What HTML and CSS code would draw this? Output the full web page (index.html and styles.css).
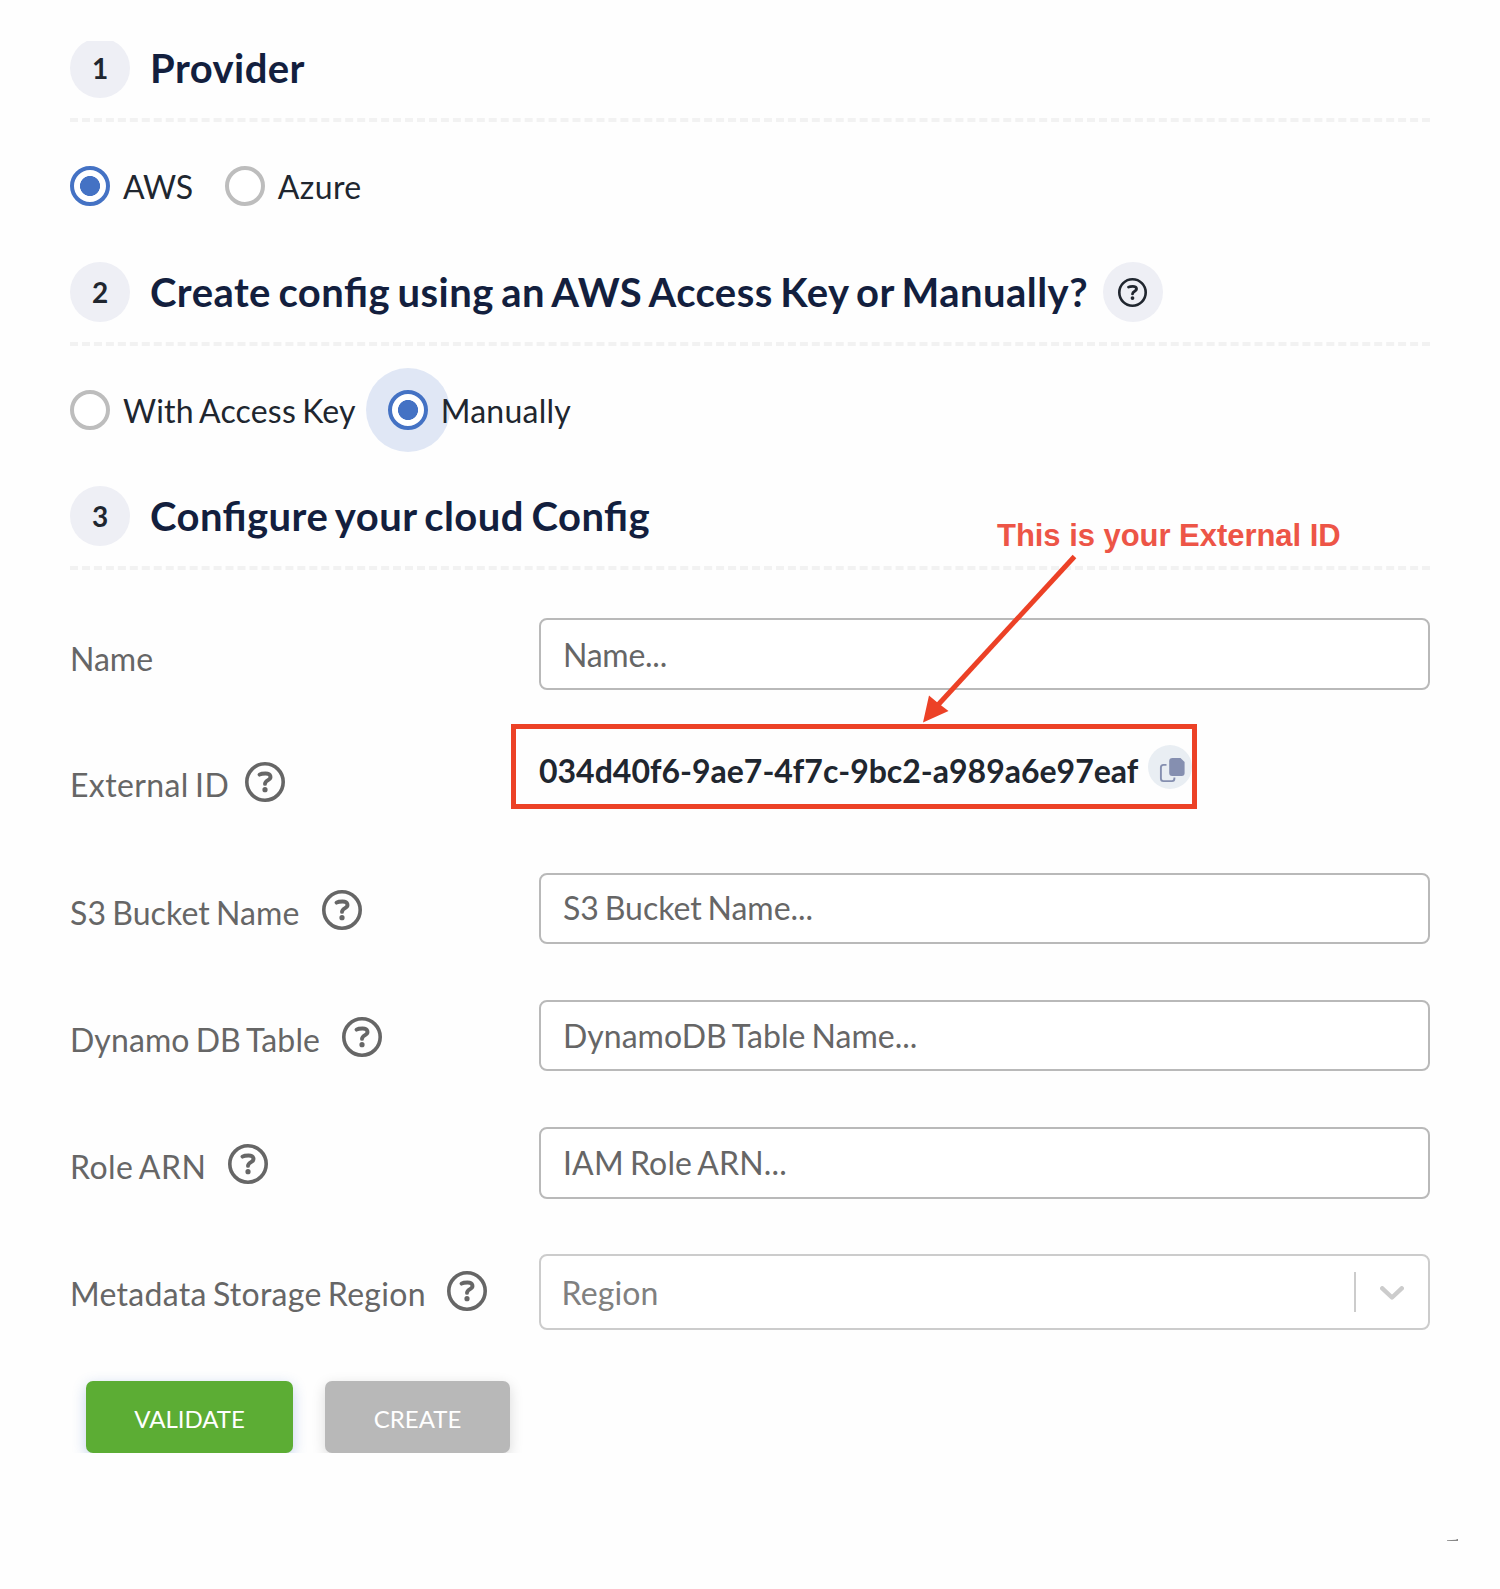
FILE: index.html
```html
<!DOCTYPE html>
<html lang="en">
<head>
<meta charset="utf-8">
<title>Cloud Config</title>
<link rel="stylesheet" href="styles.css">
</head>
<body>
<svg class="defs" width="0" height="0">
  <symbol id="help" viewBox="0 0 40 40">
    <circle cx="20" cy="20" r="18.2" fill="none" stroke="currentColor" stroke-width="3.6"/>
    <path d="M14.500 12.600C16 11.700 18 11.500 20.500 11.500C26.400 11.500 26.600 16 23.400 17.900C21.200 19.200 20 20 20 21.900" fill="none" stroke="currentColor" stroke-width="3.900" stroke-linecap="round"/>
    <circle cx="20" cy="27.700" r="2.600" fill="currentColor"/>
  </symbol>
</svg>
<main class="wizard">
  <section class="step">
    <header class="step-head"><span class="badge">1</span><h2>Provider</h2></header>
    <svg class="rule"><line x1="0" y1="2" x2="1360" y2="2"/></svg>
    <div class="options">
      <label class="option"><span class="radio on"></span><span class="t-aws">AWS</span></label>
      <label class="option"><span class="radio"></span><span class="t-azure">Azure</span></label>
    </div>
  </section>
  <section class="step">
    <header class="step-head"><span class="badge">2</span><h2 class="h-create">Create config using an AWS Access Key or Manually?</h2><span class="badge tip"><svg><use href="#help"/></svg></span></header>
    <svg class="rule"><line x1="0" y1="2" x2="1360" y2="2"/></svg>
    <div class="options">
      <label class="option"><span class="radio"></span><span class="t-key">With Access Key</span></label>
      <label class="option"><span class="radio on focus"></span><span class="t-man">Manually</span></label>
    </div>
  </section>
  <section class="step last">
    <header class="step-head"><span class="badge">3</span><h2>Configure your cloud Config</h2></header>
    <svg class="rule"><line x1="0" y1="2" x2="1360" y2="2"/></svg>
    <div class="fields">
      <div class="row name"><div class="label"><span>Name</span></div><div class="input">Name...</div></div>
      <div class="row ext"><div class="label near"><span>External ID</span><svg><use href="#help"/></svg></div>
        <div class="external"><strong>034d40f6-9ae7-4f7c-9bc2-a989a6e97eaf</strong>
          <span class="copy"><svg viewBox="0 0 44 44"><path d="M18.500 19.900H15.500Q12.900 19.900 12.900 22.500V33.500Q12.900 36.100 15.500 36.100H24Q26.400 36.100 26.400 33.500V32.500" fill="none" stroke="#858fb0" stroke-width="1.900"/><path d="M24.500 13H32.500L36.600 17V28Q36.600 31 33.600 31H24.200Q21.200 31 21.200 28V16Q21.200 13 24.500 13Z" fill="#858fb0"/></svg></span>
        </div></div>
      <div class="row bucket"><div class="label"><span>S3 Bucket Name</span><svg><use href="#help"/></svg></div><div class="input">S3 Bucket Name...</div></div>
      <div class="row dynamo"><div class="label"><span>Dynamo DB Table</span><svg><use href="#help"/></svg></div><div class="input">DynamoDB Table Name...</div></div>
      <div class="row role"><div class="label"><span>Role ARN</span><svg><use href="#help"/></svg></div><div class="input">IAM Role ARN...</div></div>
      <div class="row region"><div class="label"><span>Metadata Storage Region</span><svg><use href="#help"/></svg></div>
        <div class="input select"><span>Region</span><svg class="chevron" viewBox="0 0 24 14"><path d="M2.300 2.300L12 11.500L21.700 2.300" fill="none" stroke="#ccc" stroke-width="4.400" stroke-linecap="round" stroke-linejoin="round"/></svg></div></div>
    </div>
    <div class="actions"><button class="validate">VALIDATE</button><button class="create">CREATE</button></div>
  </section>
</main>
<div class="callout-box"></div>
<div class="callout-text">This is your External ID</div>
<svg class="callout-arrow" viewBox="0 0 170 180"><path d="M159.500 6.500L22 156" stroke="#ec4126" stroke-width="5" fill="none"/><path d="M8 172.500L14 145.500L23 153L33.500 161Z" fill="#ec4126"/></svg>
<svg class="corner" viewBox="0 0 11 2"><path d="M0 2V1.300L9 .8L10 0H11V2Z" fill="#888"/></svg>
</body>
</html>
```
FILE: styles.css
```css
* { box-sizing: border-box; }
body {
  margin: 0;
  position: relative;
  width: 1500px;
  height: 1589px;
  overflow: hidden;
  background: #fefefe;
  color: #20262f;
  font-family: Lato, sans-serif;
  font-size: 32px;
  font-feature-settings: "liga" 1;
  word-spacing: -2.200px;
}
.defs { position: absolute; }
.wizard {
  width: 1500px;
  height: 1412px;
  margin-top: 41px;
  padding: 0 70px;
  overflow: hidden;
}
.step { height: 224px; margin-top: 0; }
.step:first-child { margin-top: -3px; }
.step.last { height: auto; }
.step-head { display: flex; align-items: center; height: 60px; }
.step-head h2 {
  margin: 0 0 0 20px;
  color: #131f3e;
  font-size: 40px;
  line-height: 60px;
  font-weight: 700;
  letter-spacing: .45px;
  word-spacing: -2.600px;
  white-space: nowrap;
}
.badge {
  width: 60px;
  height: 60px;
  flex: none;
  display: flex;
  align-items: center;
  justify-content: center;
  border-radius: 50%;
  background: #eeeff5;
  font-size: 28px;
  font-weight: 700;
}
.h-create { width: 937px; }
.tip { margin-left: 16px; }
.tip svg { width: 29px; height: 29px; margin-left: -1px; }
.rule { display: block; width: 1360px; height: 4px; margin-top: 20px; }
.rule line { stroke: #f2f2f2; stroke-width: 4; stroke-dasharray: 8 3.965; }
.options { display: flex; height: 40px; margin-top: 44px; gap: 32px; }
.option { display: flex; align-items: center; gap: 13px; line-height: 40px; white-space: nowrap; }
.option span:last-child { padding-top: 1px; line-height: 39px; }
.t-aws { letter-spacing: -.3px; }
.t-azure { letter-spacing: .4px; }
.t-key { letter-spacing: .2px; }
.t-man { letter-spacing: .25px; }
.radio {
  width: 40px;
  height: 40px;
  flex: none;
  border: 4px solid #bdbdbd;
  border-radius: 50%;
  background: #fff;
}
.radio.on {
  border-color: #4472c4;
  background: radial-gradient(circle, #4472c4 9.700px, #fff 10.300px);
}
.radio.focus { box-shadow: 0 0 0 22px rgba(68, 114, 196, .16); }
.fields { padding-top: 48.400px; }
.row { display: grid; grid-template-columns: 469px 891px; height: 127.200px; align-items: start; }
.label { display: flex; align-items: flex-start; gap: 22px; color: #666; white-space: nowrap; }
.label span { line-height: 40px; padding-top: 20px; }
.label svg { width: 40px; height: 40px; margin-top: 16.600px; }
.label.near { gap: 16px; }
.input {
  height: 71.300px;
  padding-left: 22px;
  border: 2px solid #b9b9b9;
  border-radius: 8px;
  background: #fff;
  color: #666;
  line-height: 67px;
}
.name .label span { padding-top: 21px; }
.name .input { line-height: 69px; letter-spacing: -.25px; }
.ext .label { letter-spacing: .38px; }
.ext .label span { padding-top: 19px; }
.bucket .label { letter-spacing: .1px; gap: 22.500px; }
.bucket .label svg { margin-top: 17.200px; }
.bucket .input { line-height: 66px; letter-spacing: -.04px; }
.dynamo .label { letter-spacing: .1px; }
.dynamo .input { line-height: 68px; letter-spacing: .03px; }
.role .label { letter-spacing: .45px; }
.role .input { height: 72px; line-height: 68px; letter-spacing: .15px; }
.region .label { letter-spacing: .28px; gap: 21.500px; }
.input.select {
  display: flex;
  align-items: center;
  justify-content: space-between;
  height: 75.500px;
  padding: 0 24px 0 20.500px;
  border-color: #ccc;
  color: #808080;
  letter-spacing: .15px;
}
.chevron { width: 24px; height: 14px; box-sizing: content-box; padding: 14px 0 12px 24px; border-left: 2px solid #ccc; }
.external { display: flex; align-items: flex-start; height: 44px; margin-top: -.700px; }
.external strong { width: 609px; line-height: 40px; padding-top: 6px; white-space: nowrap; }
.copy { width: 44px; height: 44px; border-radius: 50%; background: #e9eef3; }
.copy svg { display: block; width: 44px; height: 44px; }
.actions { display: flex; gap: 32px; margin: -.600px 0 0 16px; }
.actions button {
  height: 72px;
  padding: 4px 0 0;
  border: 0;
  border-radius: 7px;
  color: #fff;
  font: 24px Lato, sans-serif;
}
.validate { width: 207px; background: #5cad34; box-shadow: 0 4px 14px rgba(68, 114, 196, .32); }
.create { width: 185px; background: #b8b8b8; box-shadow: 0 4px 14px rgba(0, 0, 0, .15); }
.callout-box {
  position: absolute;
  left: 511px;
  top: 724px;
  width: 686px;
  height: 85px;
  border: 5px solid #ec4126;
}
.callout-text {
  position: absolute;
  left: 997px;
  top: 516px;
  color: #ed5547;
  font: bold 31px/40px "Liberation Sans", Arial, sans-serif;
  word-spacing: 0;
  letter-spacing: -.04px;
  white-space: nowrap;
}
.callout-arrow { position: absolute; left: 915px; top: 550px; width: 170px; height: 180px; }
.corner { position: absolute; left: 1447px; top: 1539px; width: 11px; height: 2px; }
```
